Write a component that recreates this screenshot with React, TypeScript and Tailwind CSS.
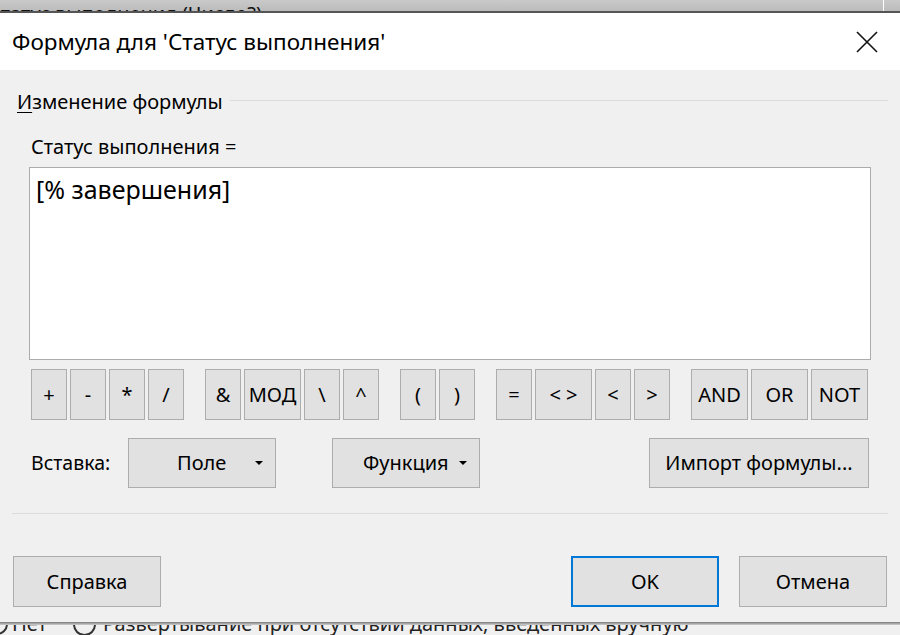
import React from "react";

const font = { fontFamily: '"Segoe UI", "Noto Sans", "Open Sans", sans-serif' };

function OpBtn({ label, wide }: { label: string; wide?: boolean }) {
  return (
    <div
      className={`flex h-[51px] items-center justify-center border border-[#adadad] bg-[#e1e1e1] text-[20px] text-black ${wide ? "w-[57px]" : "w-[36px]"}`}
    >
      {label}
    </div>
  );
}

function Arrow() {
  return (
    <svg width="8" height="4" viewBox="0 0 8 4" className="ml-auto">
      <path d="M0 0 L8 0 L4 4 Z" fill="#000" />
    </svg>
  );
}

export default function App() {
  return (
    <div className="flex h-[635px] w-[900px] flex-col overflow-hidden bg-[#f0f0f0] text-black" style={font}>
      {/* background strip top */}
      <div className="relative h-[13px] shrink-0 overflow-hidden bg-gradient-to-b from-[#c9c9c9] to-[#b9b9b9]">
        <div className="ml-[-9px] mt-[1px] whitespace-nowrap text-[20px] leading-[26px] text-[#111]">
          статус выполнения (Число?)
        </div>
        <div className="absolute right-[16px] top-0 h-[12px] w-[1px] bg-white" />
        <div className="absolute bottom-0 left-0 h-[2px] w-full bg-[#555]" />
      </div>

      {/* dialog */}
      <div className="flex h-[609px] shrink-0 flex-col bg-[#f0f0f0]">
        {/* title bar */}
        <div className="flex h-[57px] shrink-0 items-center bg-white pl-[12px] pr-[22px]">
          <div className="text-[22.5px] leading-[30px]">Формула для 'Статус выполнения'</div>
          <svg width="22" height="22" viewBox="0 0 22 22" className="ml-auto">
            <path d="M1 1 L21 21 M21 1 L1 21" stroke="#111" strokeWidth="1.6" />
          </svg>
        </div>

        {/* group header */}
        <div className="ml-[17px] mr-[12px] mt-[19px] flex h-[26px] items-start">
          <div className="whitespace-nowrap text-[20px] leading-[26px]">
            <span className="underline decoration-1 underline-offset-[3px]">И</span>зменение формулы
          </div>
          <div className="ml-[7px] mt-[11px] h-[1px] flex-1 bg-[#dcdcdc]" />
        </div>

        <div className="ml-[31px] mt-[19px] h-[26px] text-[20px] leading-[26px]">Статус выполнения =</div>

        <div className="ml-[29px] mt-[7px] h-[193px] w-[842px] border border-[#acacac] bg-white px-[6px] pt-[5px] text-[25px] leading-[32px]">
          [% завершения]
        </div>

        {/* operator buttons */}
        <div className="ml-[31px] mt-[9px] flex">
          <div className="flex gap-[3px]">
            <OpBtn label="+" />
            <OpBtn label="-" />
            <OpBtn label="*" />
            <OpBtn label="/" />
          </div>
          <div className="ml-[21px] flex gap-[3px]">
            <OpBtn label="&" />
            <OpBtn label="МОД" wide />
            <OpBtn label="\" />
            <OpBtn label="^" />
          </div>
          <div className="ml-[21px] flex gap-[3px]">
            <OpBtn label="(" />
            <OpBtn label=")" />
          </div>
          <div className="ml-[21px] flex gap-[3px]">
            <OpBtn label="=" />
            <OpBtn label="< >" wide />
            <OpBtn label="<" />
            <OpBtn label=">" />
          </div>
          <div className="ml-[21px] flex gap-[3px]">
            <OpBtn label="AND" wide />
            <OpBtn label="OR" wide />
            <OpBtn label="NOT" wide />
          </div>
        </div>

        {/* insert row */}
        <div className="ml-[31px] mt-[18px] flex h-[50px] items-center">
          <div className="w-[97px] text-[19.5px]">Вставка:</div>
          <div className="flex h-[50px] w-[148px] items-center border border-[#adadad] bg-[#e1e1e1] pl-[48px] pr-[12px] text-[20px]">
            Поле
            <Arrow />
          </div>
          <div className="ml-[56px] flex h-[50px] w-[148px] items-center border border-[#adadad] bg-[#e1e1e1] pl-[30px] pr-[12px] text-[20px]">
            Функция
            <Arrow />
          </div>
          <div className="ml-[169px] flex h-[50px] w-[220px] items-center justify-center border border-[#adadad] bg-[#e1e1e1] text-[20px]">
            Импорт формулы...
          </div>
        </div>

        <div className="ml-[12px] mt-[25px] h-[1px] w-[876px] bg-[#dcdcdc]" />

        {/* bottom buttons */}
        <div className="ml-[13px] mt-[42px] flex h-[51px]">
          <div className="flex h-[51px] w-[148px] items-center justify-center border border-[#adadad] bg-[#e1e1e1] text-[20px]">
            Справка
          </div>
          <div className="ml-[410px] flex h-[51px] w-[148px] items-center justify-center border-2 border-[#0078d7] bg-[#e1e1e1] text-[20px]">
            OK
          </div>
          <div className="ml-[20px] flex h-[51px] w-[148px] items-center justify-center border border-[#adadad] bg-[#e1e1e1] text-[20px]">
            Отмена
          </div>
        </div>
      </div>

      {/* shadow */}
      <div className="h-[3px] shrink-0 bg-gradient-to-b from-[#7a7a7a] to-[#cfcfcf]" />

      {/* background strip bottom */}
      <div className="flex h-[10px] shrink-0 items-start overflow-hidden bg-[#f0f0f0]">
        <div className="-mt-[14px] flex items-center whitespace-nowrap text-[20px] leading-[26px] text-[#222]">
          <span className="ml-[-14px] inline-block h-[22px] w-[22px] rounded-full border-2 border-[#333]" />
          <span className="ml-[4px]">Нет</span>
          <span className="ml-[26px] inline-block h-[23px] w-[23px] rounded-full border-2 border-[#333]" />
          <span className="ml-[7px]">Развертывание при отсутствии данных, введенных вручную</span>
        </div>
      </div>
    </div>
  );
}
